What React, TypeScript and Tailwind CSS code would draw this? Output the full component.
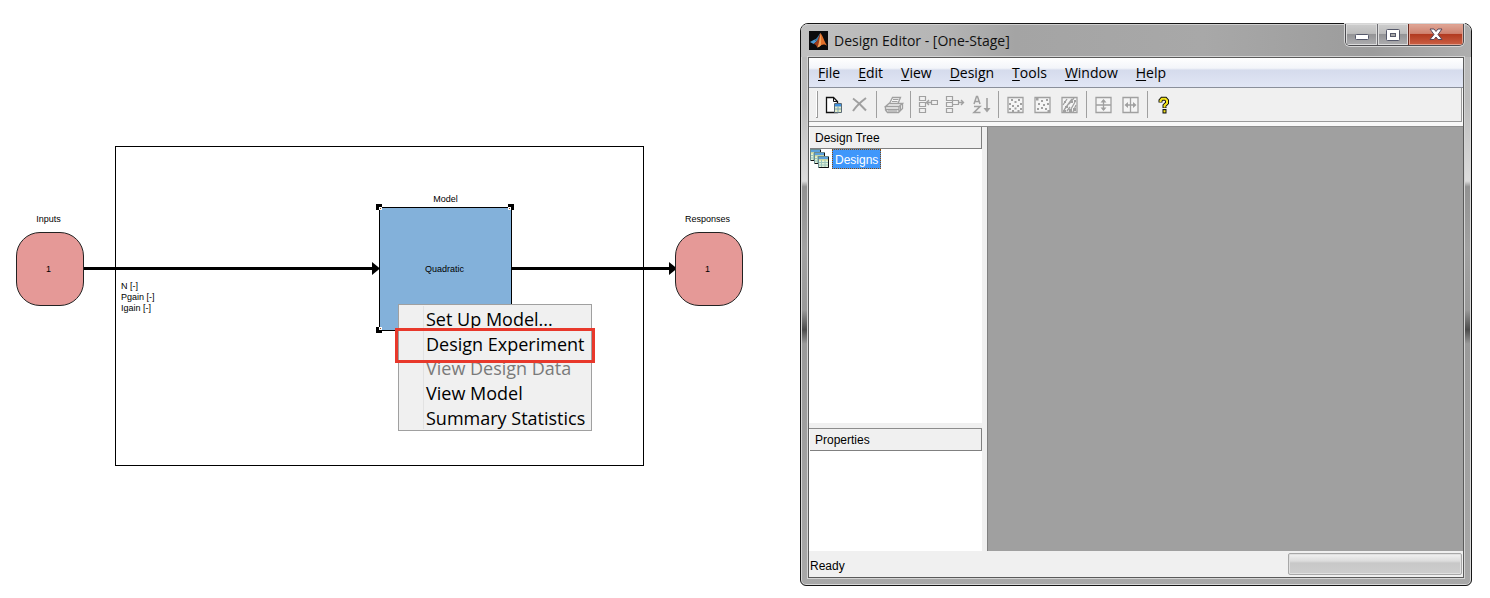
import type { ReactNode } from "react";

function MatlabLogo() {
  return (
    <svg width="19" height="19" viewBox="0 0 19 19" aria-hidden="true" className="shrink-0">
      <rect width="19" height="19" fill="#0b0b0d" />
      <path d="M1 11 L5.5 8.6 L7.6 10.6 L4.6 13 Z" fill="#4f9ad0" />
      <path d="M5.5 8.6 C8 8 9 5 10.6 3 L11.4 2 L9.6 9 L7.6 10.6 Z" fill="#3d7fae" />
      <path d="M4.6 13 L7.6 10.6 C9 8.5 10.2 4 11.4 2 L11 10 L8.4 16.4 C7.4 14.6 6.4 13.2 4.6 13 Z" fill="#9c3a1a" />
      <path d="M11.4 2 C13.4 4 15.4 10.6 18 14.6 C16 13.6 14.6 12.8 12.6 14 C11 15 10 16.2 8.4 16.4 C10.2 13 10.8 7 11.4 2 Z" fill="#e2702a" />
      <path d="M11.4 2 C12 6 12.4 10 11.8 14.4 C10.6 15.4 9.6 16.3 8.4 16.4 C10.2 13 10.8 7 11.4 2 Z" fill="#f2a35c" />
    </svg>
  );
}

function Icon({ children }: { children: ReactNode }) {
  return (
    <svg width="20" height="20" viewBox="0 0 20 20" fill="none" stroke="#a0a0a0" strokeWidth="1" aria-hidden="true">
      {children}
    </svg>
  );
}

const NewIcon = () => (
  <Icon>
    <path d="M3.5 2.5h7l4 4v11h-11z" fill="#fff" stroke="#111" strokeWidth="1.3" />
    <path d="M10.500 2.5v4h4" stroke="#111" />
    <path d="M11.500 8.5h7v9h-7z" fill="#e3ecc8" stroke="#5a6a76" />
    <path d="M12 9h6v2.500h-6z" fill="#3f8fdc" stroke="none" />
    <path d="M12 14h6M15 11.500v6" stroke="#7fa6b4" />
  </Icon>
);
const DeleteIcon = () => (
  <Icon>
    <path d="M3 3.500 C8 7 12 11 16 15.500" strokeWidth="2" />
    <path d="M16 3 C12 6 7 10 3 16" strokeWidth="2" />
  </Icon>
);
const PrintIcon = () => (
  <Icon>
    <path d="M5.5 8.5 L8.5 2.5 H16.5 L14 8.5" fill="#f7f7f7" strokeWidth="1.3" />
    <path d="M9 4.5h5.5M8 6.5h5.5" />
    <path d="M1.5 11.5 L5 8.5 H18.5 L15 11.5 Z" strokeWidth="1.3" />
    <path d="M1.5 11.5 V15 L3.5 17.5 H14.5 L18.5 13.5 V8.5 M15 11.5 V17 M1.5 14.5 H15" strokeWidth="1.3" />
    <path d="M4 16h9M16.5 11v4" />
  </Icon>
);
const InsertNodeIcon = () => (
  <Icon>
    <path d="M1.5 1.5h6v4h-6zM1.5 7.500h6v4h-6zM1.5 13.500h6v4h-6zM13.5 5.5h6v4h-6z" strokeWidth="1.2" />
    <path d="M13 7.5H8.500M11 5L8.500 7.5L11 10" strokeWidth="1.4" />
  </Icon>
);
const ExtractNodeIcon = () => (
  <Icon>
    <path d="M1.5 1.5h6v4h-6zM1.5 7.500h6v4h-6zM1.5 13.500h6v4h-6zM7.5 5.5h6v4h-6z" strokeWidth="1.2" />
    <path d="M13.5 7.5H18.500M16 5L18.500 7.5L16 10" strokeWidth="1.4" />
  </Icon>
);
const SortIcon = () => (
  <Icon>
    <path d="M2 9 L4.5 1.5 H5.5 L8 9 M3 6.5 H7" strokeWidth="1.5" />
    <path d="M2 11.5 H8 L2 17.5 H8.5" strokeWidth="1.6" />
    <path d="M15 3V16" strokeWidth="1.6" />
    <path d="M11.500 13H18.500L15 17.5Z" fill="#a0a0a0" stroke="none" />
  </Icon>
);
const BoxIcon = ({ children }: { children: ReactNode }) => (
  <Icon>
    <path d="M2 2.5h15v15h-15z" fill="#f5f5f5" strokeWidth="1.3" />
    {children}
  </Icon>
);
const GridIcon = () => (
  <BoxIcon>
    <path
      d="M5 4h2v2H5zM12 4h2v2h-2zM8.500 6h2v2h-2zM3 8h2v2H3zM14 8h2v2h-2zM6 10h2v2H6zM11 10h2v2h-2zM3 13h2v2H3zM8.500 12.500h2v2h-2zM14 13h2v2h-2zM6 15h2v2H6zM11.500 15h2v2h-2z"
      fill="#a0a0a0"
      stroke="none"
    />
  </BoxIcon>
);
const ScatterIcon = () => (
  <BoxIcon>
    <path
      d="M3 3h2.500v2.500H3zM8 5h2v2H8zM13 4h2v2h-2zM5 8h2v2H5zM10 9h2v2h-2zM14 8h2v2h-2zM4 13h2v2H4zM8 12h2v2H8zM12 13h2v2h-2zM14.500 15h2.500v2.500h-2.500z"
      fill="#a0a0a0"
      stroke="none"
    />
  </BoxIcon>
);
const OptimalIcon = () => (
  <BoxIcon>
    <path d="M3 10 L7 4 M4 15 L12 4 M9 9 L14 3 M11 14 L15 7 M13 17 L16 10 M7 16 L10 12" strokeWidth="1.3" />
    <path d="M4 6h2v2H4zM5 11h3v2H5zM11 6h2v2h-2zM9 14h3v3H9zM13 13h3v3h-3zM3 15h3v2H3zM14 5h2v2h-2z" fill="#a0a0a0" stroke="none" />
  </BoxIcon>
);
const SplitRowsIcon = () => (
  <BoxIcon>
    <path d="M2 10H17M9.500 5V15" strokeWidth="1.3" />
    <path d="M6.500 7.500L9.500 4L12.500 7.500ZM6.500 12.500L9.500 16L12.500 12.500Z" fill="#a0a0a0" stroke="none" />
  </BoxIcon>
);
const SplitColumnsIcon = () => (
  <BoxIcon>
    <path d="M9.500 2.5V17.5M5 10H14" strokeWidth="1.3" />
    <path d="M7 7L3.500 10L7 13ZM12 7L15.500 10L12 13Z" fill="#a0a0a0" stroke="none" />
  </BoxIcon>
);
const HelpIcon = () => (
  <Icon>
    <path d="M5.500 7.500V5.500L7 3.800H10.500L12 5.500V8L9.500 10.500V13" stroke="#111" strokeWidth="4" />
    <path d="M7.500 14h4v4.500h-4z" fill="#111" stroke="none" />
    <path d="M5.500 7V5.500L7 3.800H10.500L12 5.500V8L9.500 10.500V12.500" stroke="#f5e51b" strokeWidth="2" />
    <path d="M8.500 15.200h2v2.200h-2z" fill="#f5e51b" stroke="none" />
  </Icon>
);

const toolGroups = [
  [
    { label: "New design", icon: <NewIcon /> },
    { label: "Delete", icon: <DeleteIcon /> },
  ],
  [{ label: "Print", icon: <PrintIcon /> }],
  [
    { label: "Insert", icon: <InsertNodeIcon /> },
    { label: "Extract", icon: <ExtractNodeIcon /> },
    { label: "Sort", icon: <SortIcon /> },
  ],
  [
    { label: "Classical design", icon: <GridIcon /> },
    { label: "Space-filling design", icon: <ScatterIcon /> },
    { label: "Optimal design", icon: <OptimalIcon /> },
  ],
  [
    { label: "Split horizontally", icon: <SplitRowsIcon /> },
    { label: "Split vertically", icon: <SplitColumnsIcon /> },
  ],
  [{ label: "Help", icon: <HelpIcon /> }],
];

const menus = ["File", "Edit", "View", "Design", "Tools", "Window", "Help"];

const contextItems = [
  { label: "Set Up Model..." },
  { label: "Design Experiment" },
  { label: "View Design Data", disabled: true },
  { label: "View Model" },
  { label: "Summary Statistics" },
];

function TerminalNode({ label, className }: { label: string; className: string }) {
  return (
    <div className={`absolute top-[214px] flex w-[68px] flex-col items-center gap-[7px] ${className}`}>
      <span className="pr-[3px] leading-[11px]">{label}</span>
      <div className="flex h-[74px] w-full items-center justify-center rounded-[24px] border border-[#222] bg-[#e59997] pr-[3px]">
        1
      </div>
    </div>
  );
}

function Handle({ className }: { className: string }) {
  return (
    <span className={`absolute flex size-[6px] bg-black ${className}`}>
      <span className="size-[3px] border border-white bg-[#8a4a20]" />
    </span>
  );
}

function ModelDiagram() {
  return (
    <section
      aria-label="Model diagram"
      className="relative w-[800px] shrink-0 font-['Liberation_Sans',sans-serif] text-[9px] leading-[11px] text-black"
    >
      <div className="absolute top-[146px] left-[115px] h-[320px] w-[529px] border border-black" />
      <svg className="absolute top-[260px] left-[82px]" width="596" height="18" viewBox="0 0 596 18" aria-hidden="true">
        <path d="M0 7h292v3H0zM430 7h160v3H430z" />
        <path d="M290 2l8 6.500l-8 6.500zM587 2l8 6.500l-8 6.500z" />
      </svg>
      <TerminalNode label="Inputs" className="left-4" />
      <TerminalNode label="Responses" className="left-[675px]" />
      <ul className="absolute top-[281px] left-[121px]">
        <li>N [-]</li>
        <li>Pgain [-]</li>
        <li>Igain [-]</li>
      </ul>
      <div className="absolute top-[194px] left-[379px] w-[133px] text-center">Model</div>
      <div className="absolute top-[207px] left-[379px] flex h-[124px] w-[133px] items-center justify-center border border-black bg-[#83b1da] pr-[2px]">
        Quadratic
        <Handle className="-top-[4px] -left-[4px] items-end justify-end" />
        <Handle className="-top-[4px] -right-[3px] items-end justify-start" />
        <Handle className="-bottom-[3px] -left-[4px] items-start justify-end" />
      </div>
      <div
        role="menu"
        className="absolute top-[304px] left-[398px] flex h-[127px] w-[194px] flex-col border border-[#a0a0a0] bg-[#f0f0f0] py-px font-['Open_Sans',sans-serif] text-[18px]"
      >
        <span className="absolute inset-y-px left-6 w-px bg-[#e2e2e2]" />
        {contextItems.map((item) => (
          <button
            key={item.label}
            type="button"
            role="menuitem"
            disabled={item.disabled}
            className="flex flex-1 items-center pt-[2px] pl-[27px] text-left leading-[20px] whitespace-nowrap text-black disabled:text-[#7a7a7a]"
          >
            {item.label}
          </button>
        ))}
      </div>
      <div className="pointer-events-none absolute top-[328px] left-[395px] h-[35px] w-[200px] border-3 border-[#e8382b]" />
    </section>
  );
}

function TitleBar() {
  return (
    <header className="flex h-[33px] items-start rounded-t-[7px] bg-[linear-gradient(90deg,#c0c0c0_0%,#b6b6b6_20%,#a4a4a4_32%,#a8a8a8_60%,#9c9c9c_85%,#aeaeae_100%)] pl-[8px] inset-shadow-[0_1px_0_#d0d0d0]">
      <div className="flex h-full items-center gap-[6px]">
        <MatlabLogo />
        <h1 className="text-[14px] whitespace-nowrap text-[#111]">Design Editor - [One-Stage]</h1>
      </div>
      <div className="mr-[7px] ml-auto flex h-[22px] overflow-hidden rounded-b-[5px] border border-t-0 border-[#4c4c50] shadow-[0_0_0_1px_#d6d6d6]">
        <button
          type="button"
          aria-label="Minimize"
          className="flex w-8 items-center justify-center border-r border-[#6d6d72] bg-[linear-gradient(#cdcdcd_0%,#bcbcbc_45%,#949496_50%,#adadaf_100%)] pt-1 inset-shadow-[0_0_0_1px_#dcdcdc]"
        >
          <svg width="16" height="8" viewBox="0 0 16 8" aria-hidden="true">
            <rect x="1.500" y="1.500" width="13" height="5" rx="1" fill="#fff" stroke="#55586a" />
          </svg>
        </button>
        <button
          type="button"
          aria-label="Maximize"
          className="flex w-[31px] items-center justify-center border-r border-[#6b2a20] bg-[linear-gradient(#cdcdcd_0%,#bcbcbc_45%,#949496_50%,#adadaf_100%)] inset-shadow-[0_0_0_1px_#dcdcdc]"
        >
          <svg width="14" height="12" viewBox="0 0 14 12" aria-hidden="true">
            <rect x=".5" y=".5" width="13" height="11" rx="1" fill="#fff" stroke="#55586a" />
            <rect x="4.500" y="4.500" width="5" height="3" fill="#aaa" stroke="#55586a" />
          </svg>
        </button>
        <button
          type="button"
          aria-label="Close"
          className="flex w-[54px] items-center justify-center bg-[linear-gradient(#dfa898_0%,#cf8270_45%,#b23a20_50%,#cc6044_100%)] inset-shadow-[0_0_0_1px_#e0a08f]"
        >
          <svg width="14" height="13" viewBox="0 0 14 13" aria-hidden="true">
            <path d="M1 1h4l2 2.500l2-2.500h4l-4 5.500l4 5h-4l-2-2.500l-2 2.500h-4l4-5z" fill="#fff" stroke="#55485a" />
          </svg>
        </button>
      </div>
    </header>
  );
}

function MenuBar() {
  return (
    <nav className="flex h-[30px] items-center gap-[18px] border-b border-[#8a8f9a] bg-[linear-gradient(#ffffff_0%,#f3f5fa_35%,#d5dbec_42%,#e1e6f5_100%)] pl-[9px] text-[14px] text-black">
      {menus.map((name) => (
        <button key={name} type="button">
          <span className="underline underline-offset-2">{name[0]}</span>
          {name.slice(1)}
        </button>
      ))}
    </nav>
  );
}

function Toolbar() {
  return (
    <div className="border-b border-[#8c8c8c] bg-[#f8f8f8] pr-px pb-1">
      <div
        role="toolbar"
        aria-label="Design tools"
        className="flex h-[34px] items-center border-r border-b border-[#9a9a9a] bg-[#f0f0f0] pl-[7px]"
      >
        <span className="mr-px h-[27px] w-[2px] border-r border-b border-[#9a9a9a] bg-white" />
        {toolGroups.map((group, index) => (
          <div key={index} className="flex items-center">
            {index > 0 && <span className="mx-[3px] h-[27px] w-px bg-[#a0a0a0]" />}
            {group.map((tool) => (
              <button key={tool.label} type="button" aria-label={tool.label} className="flex w-[27px] justify-center">
                {tool.icon}
              </button>
            ))}
          </div>
        ))}
      </div>
    </div>
  );
}

function DesignsIcon() {
  const sheets = [
    { x: 0, y: 0 },
    { x: 4, y: 3 },
    { x: 8, y: 7 },
  ];
  return (
    <svg width="19" height="19" viewBox="0 0 19 19" aria-hidden="true">
      {sheets.map(({ x, y }) => (
        <g key={x} transform={`translate(${x} ${y})`}>
          <rect x=".5" y=".5" width="10" height="11" fill="#e2f2d8" stroke="#6c8c90" />
          <path d="M1 1h9v2.500H1z" fill="#5aa0dc" />
          <path d="M1 4h9" stroke="#e6dc7a" />
          <path d="M1 6.500h9M1 9h9M3.500 4v7M7 4v7" stroke="#9cc4ba" />
          <path d="M10.500 1v10.500H1" fill="none" stroke="#111" />
        </g>
      ))}
    </svg>
  );
}

function PanelHeading({ children }: { children: ReactNode }) {
  return (
    <h2 className="h-[22px] border-r border-b border-[#808080] bg-[#f0f0f0] pl-[5px] text-[12px] leading-[23px] text-black">
      {children}
    </h2>
  );
}

function DesignEditor() {
  return (
    <section
      aria-label="Design Editor"
      className="flex min-w-0 flex-1 flex-col rounded-t-[8px] rounded-b-[6px] border border-[#151515] bg-[linear-gradient(#b8b8b8_0%,#bcbcbc_14%,#dcdcdc_28%,#929292_29%,#a2a2a2_40%,#9a9a9a_51%,#4c4c4c_54.500%,#9a9a9a_57%,#a0a0a0_75%,#a8a8a8_100%)] font-['Open_Sans',sans-serif] inset-shadow-[0_0_0_1px_#d8d8d8]"
    >
      <TitleBar />
      <div className="mx-[7px] mb-[7px] flex flex-1 flex-col border border-[#5a5a5a] bg-[#f0f0f0] shadow-[0_0_0_1px_#d4d4d4]">
        <MenuBar />
        <Toolbar />
        <div className="flex flex-1 font-['Liberation_Sans',sans-serif] text-[12px]">
          <aside className="flex w-[173px] flex-col gap-[5px]">
            <div className="flex flex-7 basis-[288px] flex-col bg-white pl-px">
              <PanelHeading>Design Tree</PanelHeading>
              <div className="flex items-start gap-[3px]">
                <DesignsIcon />
                <button
                  type="button"
                  className="h-5 border border-dotted border-[#8a4a08] bg-[#3f97fb] px-[2px] text-[12px] leading-[20px] text-white"
                >
                  Designs
                </button>
              </div>
            </div>
            <div className="flex flex-3 basis-[120px] flex-col border-t border-[#8c8c8c] bg-white pl-px">
              <PanelHeading>Properties</PanelHeading>
            </div>
          </aside>
          <div className="ml-[5px] flex-1 border-l border-[#808080] bg-[#a0a0a0]" />
        </div>
        <footer className="flex h-[26px] items-center pr-px pl-px font-['Liberation_Sans',sans-serif] text-[12px] text-black">
          <span className="pt-[3px]">Ready</span>
          <span className="ml-auto h-[22px] w-[174px] rounded-[2px] border border-[#a8a8a8] bg-[linear-gradient(#f2f2f2_0%,#dcdcdc_35%,#c8c8c8_45%,#cdcdcd_100%)] inset-shadow-[0_0_0_1px_#e0e0e0]" />
        </footer>
      </div>
    </section>
  );
}

export default function App() {
  return (
    <main className="flex min-h-screen bg-white">
      <ModelDiagram />
      <div className="flex min-w-0 flex-1 pt-[23px] pr-[18px] pb-[12px]">
        <DesignEditor />
      </div>
    </main>
  );
}
